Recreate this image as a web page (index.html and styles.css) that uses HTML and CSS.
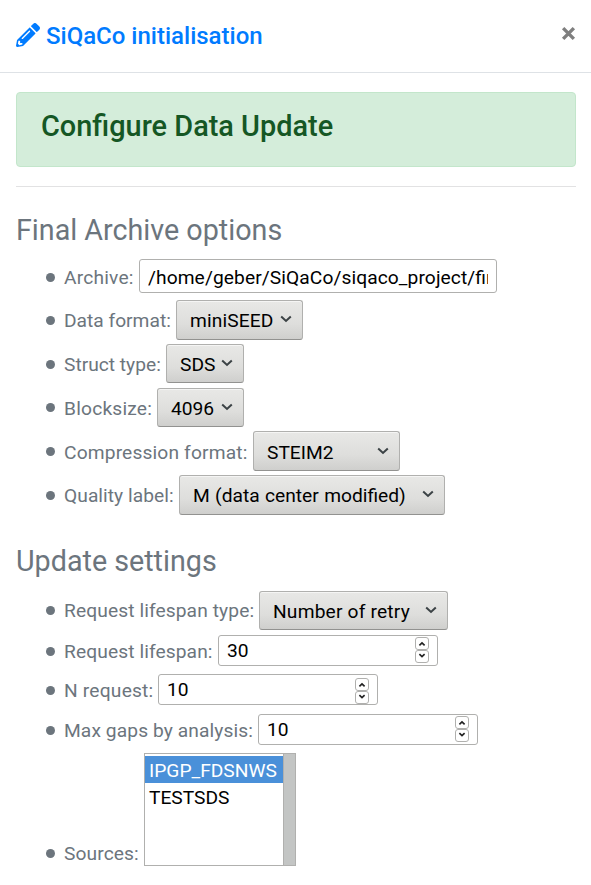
FILE: index.html
```html
<!DOCTYPE html>
<html lang="en">
<head>
<meta charset="utf-8">
<title>SiQaCo initialisation</title>
<link rel="stylesheet" href="styles.css">
</head>
<body>
<svg class="defs" width="0" height="0"><defs>
<symbol id="chev" viewBox="0 0 12 8"><path d="M1.2 1.5 6 6 10.8 1.5"/></symbol>
<symbol id="spin" viewBox="0 0 14 26"><rect x=".5" y=".5" width="13" height="12" rx="2.5"/><rect x=".5" y="13.5" width="13" height="12" rx="2.5"/><path d="M4.400 8.400 7 6 9.600 8.400M4.400 17.100 7 19.500 9.600 17.100"/></symbol>
</defs></svg>
<header class="head">
<svg class="pencil" viewBox="0 0 512 512"><path d="M498 142l-46 46c-5 5-13 5-17 0L324 77c-5-5-5-12 0-17l46-46c19-19 49-19 68 0l60 60c19 19 19 49 0 68zm-214-42L22 362 0 484c-3 16 12 30 28 28l122-22 262-262c5-5 5-13 0-17L301 100c-4-5-12-5-17 0zM124 340c-5-6-5-14 0-20l154-154c6-5 14-5 20 0s5 14 0 20L144 340c-6 5-14 5-20 0zm-36 84h48v36l-64 12-32-32 12-64h36v48z"/></svg>
<h5 class="title">SiQaCo initialisation</h5>
<svg class="close" viewBox="0 0 14 14"><path d="M2 2 12 12M12 2 2 12"/></svg>
</header>
<main class="body">
<div class="alert"><h3>Configure Data Update</h3></div>
<hr>
<h3 class="section">Final Archive options</h3>
<ul class="options archive">
<li><label class="l75">Archive:</label><div class="field path"><span>/home/geber/SiQaCo/siqaco_project/<b>fin</b></span></div></li>
<li><label class="l112">Data format:</label><div class="select w127">miniSEED<svg><use href="#chev"/></svg></div></li>
<li><label class="l102">Struct type:</label><div class="select w78">SDS<svg><use href="#chev"/></svg></div></li>
<li><label class="l93">Blocksize:</label><div class="select w87">4096<svg><use href="#chev"/></svg></div></li>
<li><label class="l189">Compression format:</label><div class="select w147">STEIM2<svg><use href="#chev"/></svg></div></li>
<li><label class="l115">Quality label:</label><div class="select w266">M (data center modified)<svg><use href="#chev"/></svg></div></li>
</ul>
<h3 class="section update">Update settings</h3>
<ul class="options updates">
<li><label class="l195">Request lifespan type:</label><div class="select w189">Number of retry<svg><use href="#chev"/></svg></div></li>
<li><label class="l154">Request lifespan:</label><div class="field number">30<svg><use href="#spin"/></svg></div></li>
<li><label class="l94">N request:</label><div class="field number low">10<svg><use href="#spin"/></svg></div></li>
<li><label class="l194">Max gaps by analysis:</label><div class="field number">10<svg><use href="#spin"/></svg></div></li>
<li class="sources"><label class="l80">Sources:</label><div class="list"><div class="items"><div class="on">IPGP_FDSNWS</div><div>TESTSDS</div></div><div class="track"></div></div></li>
</ul>
</main>
</body>
</html>
```
FILE: styles.css
```css
* { box-sizing: border-box; }
body { margin: 0; background: #fff; color: #6c757d; font: 19.2px/28px Roboto, sans-serif; }
.defs { display: block; height: 0; }
.head { display: flex; align-items: center; height: 73px; padding: 0 15px 0 16px; border-bottom: 1px solid #dee2e6; color: #007bff; }
.pencil { width: 24px; height: 24px; fill: currentColor; margin-top: -2px; }
.title { margin: 0 auto 0 6px; font-size: 24px; font-weight: 500; }
.close { width: 15px; height: 15px; margin: -6px 0 0; fill: none; stroke: #7f7f7f; stroke-width: 3.2; }
.body { padding: 19px 15px 0 16px; }
.alert { height: 75px; padding: 16px 24px; border: 1px solid #c3e6cb; border-radius: 4px; background: #d4edda; color: #155724; }
h3 { margin: 0; font-size: 28.9px; line-height: 35px; font-weight: 500; }
hr { height: 1px; margin: 19px 0 26px; border: 0; background: #e2e2e3; }
.section { font-size: 28.7px; font-weight: 400; }
.options { margin: 0; padding: 0 0 0 30px; list-style: none; }
li { display: flex; align-items: center; height: 43.75px; }
li::before { content: ""; width: 9px; height: 9px; margin: 1px 9px 0 0; border-radius: 50%; background: #6c757d; flex: none; }
label { flex: none; white-space: nowrap; letter-spacing: .1px; padding-top: 2px; }
.l75 { width: 75px; letter-spacing: .2px; }
.l112 { width: 112px; letter-spacing: 0; }
.l102 { width: 102px; letter-spacing: 0; }
.l93 { width: 93px; letter-spacing: .2px; }
.l189 { width: 189px; letter-spacing: .15px; }
.l115 { width: 115px; letter-spacing: .05px; }
.l195 { width: 195px; }
.l154 { width: 154px; }
.l94 { width: 94px; letter-spacing: .2px; }
.l194 { width: 194px; }
.l80 { width: 80px; }
.archive { margin-top: 7px; }
.archive label { padding-top: 3px; }
.archive .l75 { padding-top: 2px; }
.select, .field { display: flex; align-items: center; border: 1px solid #b0b0ae; border-radius: 3px; color: #000; white-space: nowrap; }
.select { height: 39.5px; padding: 3px 10px 0 13px; justify-content: space-between; border-bottom-color: #929290; background: linear-gradient(#e8e8e6, #dededc 60%, #cfcfcd); box-shadow: inset 0 1px #f5f5f4; }
.select svg { width: 12px; height: 8px; margin-top: -4px; fill: none; stroke: #3b4245; stroke-width: 2; }
.w127 { width: 127px; letter-spacing: .1px; }
.w78 { width: 78px; }
.w87 { width: 87px; }
.w147 { width: 147px; }
.w266 { width: 266px; word-spacing: .6px; }
.w189 { width: 189px; letter-spacing: .18px; }
.field { background: #fff; padding: 1px 8px 0; }
.path { width: 358px; height: 34px; margin-bottom: 1px; padding-top: 3px; letter-spacing: .09px; }
.path span { overflow: hidden; }
.path b { font-weight: 400; letter-spacing: 0; }
.archive li:first-child { height: 43px; }
.update { margin-top: 27px; }
.updates { margin-top: 11px; }
.updates li { height: 39.5px; }
.updates li:first-child { height: 41px; }
.number { width: 220px; height: 31px; justify-content: space-between; }
.number svg { width: 14px; height: 26px; margin-top: -2px; fill: none; stroke: #b0b0ae; }
#spin path { stroke: #222; stroke-width: 1.7; }
.low { margin-top: -1px; }
.low svg { margin-top: 1px; }
.updates .sources { height: 113px; align-items: flex-end; margin-top: 3.75px; }
.sources::before { margin-bottom: 8px; }
.sources label { line-height: 25px; }
.list { display: flex; width: 152px; height: 113px; border: 1px solid #b0b0ae; color: #000; }
.items { flex: 1; padding-top: 2px; line-height: 27px; }
.items div { height: 27px; padding-left: 4px; line-height: 29px; }
.items .on { background: #4a90d9; color: #fff; }
.track { width: 12px; background: #c3c5c4; border-left: 1px solid #b0b0ae; }
```
